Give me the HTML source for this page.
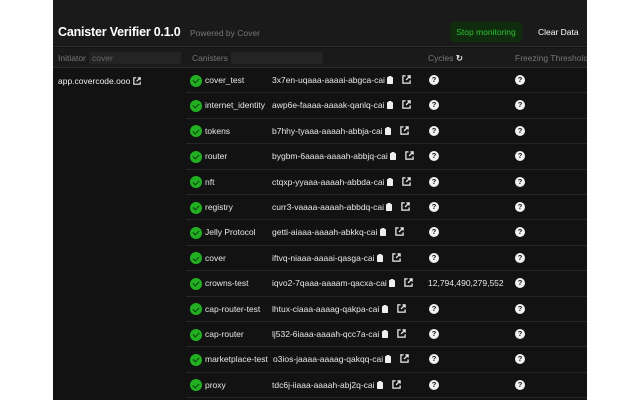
<!DOCTYPE html>
<html><head><meta charset="utf-8"><style>
*{margin:0;padding:0;box-sizing:border-box}
body{width:640px;height:400px;background:#fff;overflow:hidden;font-family:"Liberation Sans",sans-serif;position:relative}
#p{position:absolute;left:53px;top:0;width:534px;height:400px;background:#121212;overflow:hidden}
#hd{position:absolute;left:0;top:0;width:534px;height:47px;background:#1a1a1a;border-bottom:1px solid #2c2c2c}
#th{position:absolute;left:0;top:48px;width:534px;height:20px;background:#1a1a1a;border-bottom:1px solid #2c2c2c;font-size:8.5px;color:#777}
.a{position:absolute;white-space:nowrap}
.in{position:absolute;height:12px;background:#242424;border-radius:2px;color:#666;font-size:8.5px;line-height:12px;padding-left:3px}
.row{position:absolute;left:133px;width:401px;height:25.4px;border-bottom:1px solid #262626;font-size:8.5px;color:#e8e8e8}
.ck{position:absolute;left:4px;top:6.5px;width:12px;height:12px;border-radius:50%;background:#22b022}
.ck:after{content:"";position:absolute;left:3.5px;top:2.5px;width:3px;height:5px;border:solid #0a3a0a;border-width:0 1.5px 1.5px 0;transform:rotate(45deg)}
.nm{position:absolute;left:19px;top:7px}
.id{position:absolute;left:86px;top:7px}
.q{position:absolute;top:7px;width:10px;height:10px;border-radius:50%;background:#f2f2f2;color:#111;font-size:7.5px;font-weight:bold;text-align:center;line-height:10px}
svg{vertical-align:-1px}
</style></head><body>
<div id="p">
<div id="hd">
<div class="a" style="left:5px;top:25px;font-size:12.5px;font-weight:bold;color:#fff;letter-spacing:-0.2px">Canister Verifier 0.1.0</div>
<div class="a" style="left:137px;top:28px;font-size:8.5px;color:#777">Powered by Cover</div>
<div class="a" style="left:397px;top:22px;width:72px;height:20px;background:#0f2c0f;border-radius:4px;color:#2fc22f;font-size:8.5px;line-height:20px;text-align:center">Stop monitoring</div>
<div class="a" style="left:485px;top:27px;font-size:8.5px;color:#fff">Clear Data</div>
</div>
<div id="th">
<div class="a" style="left:5px;top:5px">Initiator</div>
<div class="in" style="left:36px;top:4px;width:92px">cover</div>
<div class="a" style="left:139px;top:5px">Canisters</div>
<div class="in" style="left:178px;top:4px;width:92px"></div>
<div class="a" style="left:375px;top:5px">Cycles <span style="color:#ddd;font-weight:bold">&#x21bb;</span></div>
<div class="a" style="left:462px;top:5px">Freezing Threshold</div>
</div>
<div class="a" style="left:5px;top:76px;font-size:8.5px;color:#eee">app.covercode.ooo <svg width="8" height="8" viewBox="0 0 10 10"><path d="M4 1H1v8h8V6M6 1h3v3M9 1L4.5 5.5" stroke="#eee" stroke-width="1.4" fill="none"/></svg></div>
<div id="rows"></div>
</div>
<script>
var r=[["cover_test","3x7en-uqaaa-aaaai-abgca-cai",0],["internet_identity","awp6e-faaaa-aaaak-qanlq-cai",0],["tokens","b7hhy-tyaaa-aaaah-abbja-cai",0],["router","bygbm-6aaaa-aaaah-abbjq-cai",0],["nft","ctqxp-yyaaa-aaaah-abbda-cai",0],["registry","curr3-vaaaa-aaaah-abbdq-cai",0],["Jelly Protocol","getti-aiaaa-aaaah-abkkq-cai",0],["cover","iftvq-niaaa-aaaai-qasga-cai",0],["crowns-test","iqvo2-7qaaa-aaaam-qacxa-cai",1],["cap-router-test","lhtux-ciaaa-aaaag-qakpa-cai",0],["cap-router","lj532-6iaaa-aaaah-qcc7a-cai",0],["marketplace-test","o3ios-jaaaa-aaaag-qakqq-cai",0],["proxy","tdc6j-iiaaa-aaaah-abj2q-cai",0]];
var clip='<svg width="6" height="8" viewBox="0 0 6 8"><rect x="0" y="1" width="6" height="7" rx="0.8" fill="#eee"/><rect x="1.5" y="0" width="3" height="2" fill="#eee"/></svg>';
var ext='<svg width="9" height="9" viewBox="0 0 10 10"><path d="M4 1H1v8h8V6M6 1h3v3M9 1L4.5 5.5" stroke="#eee" stroke-width="1.4" fill="none"/></svg>';
var h='';
r.forEach(function(x,i){
var t=68+i*25.4;
h+='<div class="row" style="top:'+t+'px"><div class="ck"></div><div class="a nm">'+x[0]+'</div><div class="a id"'+(x[0]=="marketplace-test"?' style="left:87px"':'')+'>'+x[1]+' '+clip+'<span style="margin-left:9px">'+ext+'</span></div>'+
(x[2]?'<div class="a" style="left:242px;top:7px">12,794,490,279,552</div>':'<div class="q" style="left:243px">?</div>')+
'<div class="q" style="left:329px">?</div></div>';});
document.getElementById('rows').innerHTML=h;
</script>
</body></html>
